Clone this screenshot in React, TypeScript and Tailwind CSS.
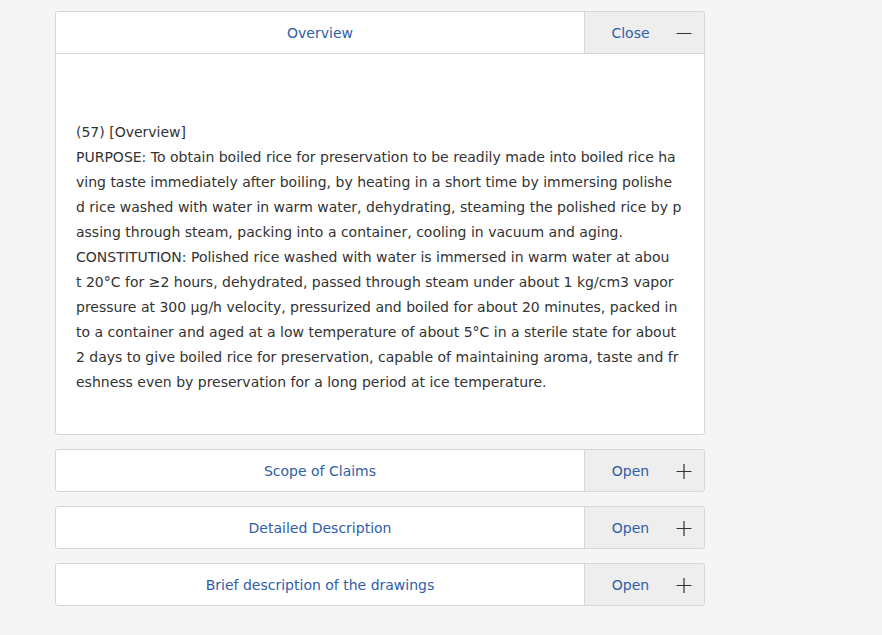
import React from "react";

const lines = [
  "(57) [Overview]",
  "PURPOSE: To obtain boiled rice for preservation to be readily made into boiled rice ha",
  "ving taste immediately after boiling, by heating in a short time by immersing polishe",
  "d rice washed with water in warm water, dehydrating, steaming the polished rice by p",
  "assing through steam, packing into a container, cooling in vacuum and aging.",
  "CONSTITUTION: Polished rice washed with water is immersed in warm water at abou",
  "t 20°C for ≥2 hours, dehydrated, passed through steam under about 1 kg/cm3 vapor",
  "pressure at 300 µg/h velocity, pressurized and boiled for about 20 minutes, packed in",
  "to a container and aged at a low temperature of about 5°C in a sterile state for about",
  "2 days to give boiled rice for preservation, capable of maintaining aroma, taste and fr",
  "eshness even by preservation for a long period at ice temperature.",
];

function Minus() {
  return (
    <svg width="16" height="16" viewBox="0 0 16 16" className="shrink-0 -mt-[2px]">
      <path d="M0.5 8.5H15.5" stroke="#333" strokeWidth="1.2" />
    </svg>
  );
}
function Plus() {
  return (
    <svg width="16" height="16" viewBox="0 0 16 16" className="shrink-0 -mt-[2px]">
      <path d="M0.5 8.5H15.5M8 1V16" stroke="#333" strokeWidth="1.2" />
    </svg>
  );
}

function Header({ title, action, open }: { title: string; action: string; open: boolean }) {
  return (
    <div className={`flex ${open ? "h-[42px] border-b border-[#d6d6d6]" : "h-[41px]"}`}>
      <div className="flex flex-1 items-center justify-center pt-[2px] text-[14px] text-[#2f5ea8]">{title}</div>
      <div className="flex w-[120px] items-center border-l border-[#d6d6d6] bg-[#eeeeee] pt-[2px]">
        <span className="w-[91px] text-center text-[14px] text-[#2f5ea8]">{action}</span>
        {open ? <Minus /> : <Plus />}
      </div>
    </div>
  );
}

export default function App() {
  return (
    <div
      className="min-h-[635px] w-full bg-[#f5f5f5] pt-[11px]"
      style={{ fontFamily: '"DejaVu Sans", Verdana, sans-serif' }}
    >
      <div className="ml-[55px] flex w-[650px] flex-col gap-[14px]">
        <div className="overflow-hidden rounded-[3px] border border-[#d6d6d6] bg-white">
          <Header title="Overview" action="Close" open />
          <div className="pl-[20px] pt-[66px] pb-[39px] text-[14px] leading-[25px] text-[#333]">
            {lines.map((l, i) => (
              <div key={i} className="whitespace-nowrap">{l}</div>
            ))}
          </div>
        </div>
        {["Scope of Claims", "Detailed Description", "Brief description of the drawings"].map((t) => (
          <div key={t} className="overflow-hidden rounded-[3px] border border-[#d6d6d6] bg-white">
            <Header title={t} action="Open" open={false} />
          </div>
        ))}
      </div>
    </div>
  );
}
